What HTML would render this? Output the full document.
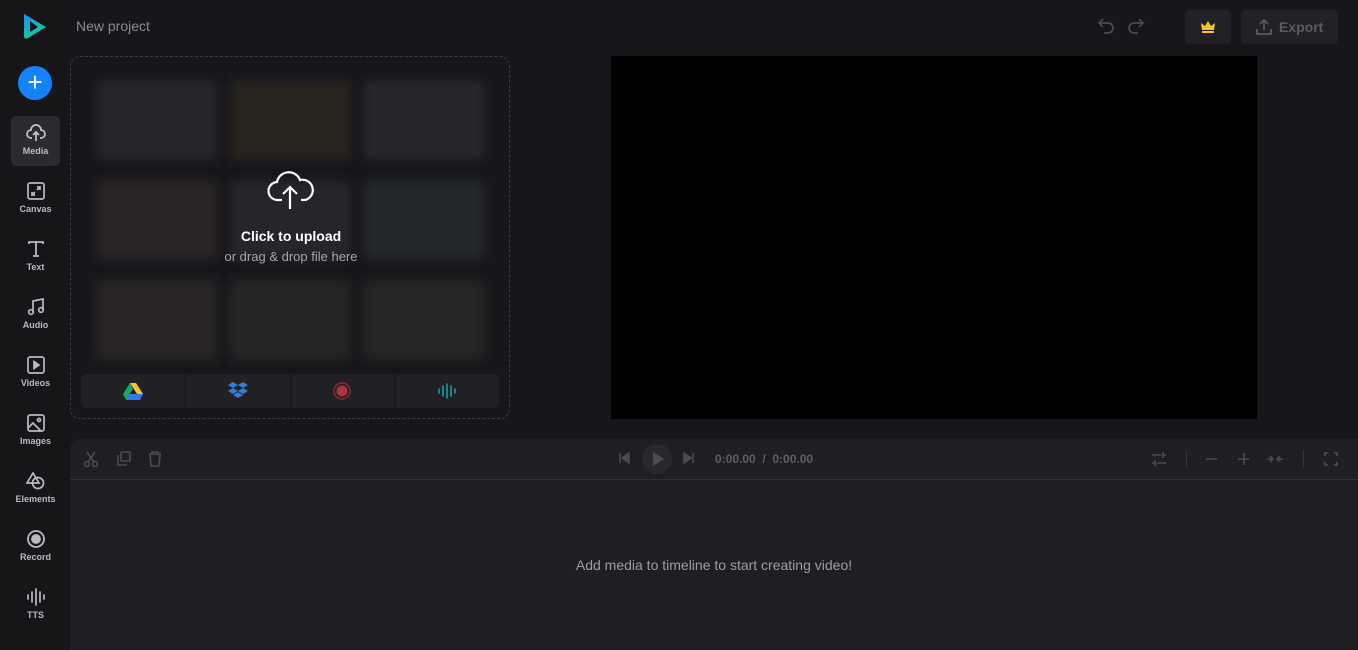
<!DOCTYPE html>
<html><head><meta charset="utf-8"><style>
*{margin:0;padding:0;box-sizing:border-box}
body{width:1358px;height:650px;background:#17171b;font-family:"Liberation Sans",sans-serif;position:relative;overflow:hidden;color:#bbb}
.abs{position:absolute}
.side{left:0;top:0;width:70px;height:650px;background:#161619}
.nav{position:absolute;left:11px;width:49px;height:50px;text-align:center;font-size:9px;font-weight:bold;color:#b9bac0}
.nav svg{display:block;margin:8px auto 4px}
.nav.act{background:#2a2a2f;border-radius:5px}
.tile{position:absolute;width:122px;height:78px;border-radius:3px;filter:blur(5px)}
.drop{left:70px;top:56px;width:440px;height:363px;border:1px dashed #3a3a40;border-radius:10px;overflow:hidden}
.bar{position:absolute;left:10px;top:317px;width:418px;height:34px;background:#212125;border-radius:5px;display:flex}
.bar div{flex:1;display:flex;align-items:center;justify-content:center;border-right:1px solid #17171b}
.bar div:last-child{border:none}
.tl{left:70px;top:439px;width:1288px;height:211px;background:#1f1f23;border-top-left-radius:10px}
.ic{stroke:#4b4b52;fill:none;stroke-width:1.6}
</style></head><body>
<div class="abs side"></div>
<svg class="abs" style="left:22px;top:13px" width="26" height="28" viewBox="0 0 26 28"><defs><linearGradient id="g" x1="0" y1="0" x2="0.6" y2="1"><stop offset="0" stop-color="#1e8bff"/><stop offset="1" stop-color="#18d08a"/></linearGradient></defs><path d="M2 1 L24 14 L6 25 Q2 27 2 23 Z M8 8 L8 19 L16 14 Z" fill="url(#g)" fill-rule="evenodd"/></svg>
<div class="abs" style="left:76px;top:18px;font-size:14px;color:#8a8b92">New project</div>
<div class="abs" style="left:18px;top:66px;width:34px;height:34px;border-radius:50%;background:#1582ff;color:#fff;font-size:26px;line-height:32px;text-align:center">+</div>
<div class="nav act" style="top:116px"><svg width="20" height="18" viewBox="0 0 20 18" fill="none" stroke="#c5c6cc" stroke-width="1.7"><path d="M6 14H5a4 4 0 0 1 0-8 5 5 0 0 1 10 0 4 4 0 0 1 0 8h-1"/><path d="M10 17V9M7 11l3-3 3 3"/></svg>Media</div>
<div class="nav" style="top:174px"><svg width="18" height="18" viewBox="0 0 18 18" fill="none" stroke="#b9bac0" stroke-width="1.7"><rect x="1" y="1" width="16" height="16" rx="2"/><path d="M5 13l3-3M5 10v3h3M13 5l-3 3M13 8V5h-3"/></svg>Canvas</div>
<div class="nav" style="top:232px"><svg width="18" height="18" viewBox="0 0 18 18" fill="none" stroke="#b9bac0" stroke-width="1.8"><path d="M2 4V2h14v2M9 2v14M6 16h6"/></svg>Text</div>
<div class="nav" style="top:290px"><svg width="18" height="18" viewBox="0 0 18 18" fill="none" stroke="#b9bac0" stroke-width="1.7"><path d="M6 14V3l10-2v11"/><circle cx="4" cy="14" r="2.3"/><circle cx="14" cy="12" r="2.3"/></svg>Audio</div>
<div class="nav" style="top:348px"><svg width="18" height="18" viewBox="0 0 18 18" fill="none" stroke="#b9bac0" stroke-width="1.7"><rect x="1" y="1" width="16" height="16" rx="2"/><path d="M7 5.5v7l5-3.5z" fill="#b9bac0"/></svg>Videos</div>
<div class="nav" style="top:406px"><svg width="18" height="18" viewBox="0 0 18 18" fill="none" stroke="#b9bac0" stroke-width="1.7"><rect x="1" y="1" width="16" height="16" rx="2"/><path d="M1 14l5-5 8 8"/><circle cx="12" cy="6" r="1.5"/></svg>Images</div>
<div class="nav" style="top:464px"><svg width="20" height="18" viewBox="0 0 20 18" fill="none" stroke="#b9bac0" stroke-width="1.7"><path d="M7 1L1 11h12z"/><circle cx="12" cy="11" r="5.5"/></svg>Elements</div>
<div class="nav" style="top:522px"><svg width="20" height="18" viewBox="0 0 20 18" fill="none" stroke="#b9bac0" stroke-width="1.8"><circle cx="10" cy="9" r="8"/><circle cx="10" cy="9" r="4" fill="#b9bac0"/></svg>Record</div>
<div class="nav" style="top:580px"><svg width="20" height="18" viewBox="0 0 20 18" fill="none" stroke="#b9bac0" stroke-width="1.7" stroke-linecap="round"><path d="M2 7v4M6 4v10M10 1v16M14 4v10M18 7v4"/></svg>TTS</div>

<div class="abs drop">
<div class="tile" style="left:25px;top:24px;background:#25262a"></div>
<div class="tile" style="left:158px;top:24px;background:#28241e"></div>
<div class="tile" style="left:292px;top:24px;background:#26272b"></div>
<div class="tile" style="left:25px;top:124px;background:#2a2425"></div>
<div class="tile" style="left:158px;top:124px;background:#25262a"></div>
<div class="tile" style="left:292px;top:124px;background:#24272b"></div>
<div class="tile" style="left:25px;top:224px;background:#282524"></div>
<div class="tile" style="left:158px;top:224px;background:#272524"></div>
<div class="tile" style="left:292px;top:224px;background:#272624"></div>
<svg class="abs" style="left:196px;top:110px" width="48" height="44" viewBox="0 0 48 44" fill="none" stroke="#fff" stroke-width="2.2"><path d="M15 33h-4a9 9 0 0 1-1-18 12 12 0 0 1 23-2 9 9 0 0 1 5 20h-4"/><path d="M23 42V20M16 27l7-7 7 7"/></svg>
<div class="abs" style="left:0;width:440px;top:171px;text-align:center;color:#fff;font-weight:bold;font-size:14px">Click to upload</div>
<div class="abs" style="left:0;width:440px;top:192px;text-align:center;color:#a5a6ad;font-size:13px">or drag &amp; drop file here</div>
<div class="bar">
<div><svg width="20" height="17" viewBox="0 0 20 17"><path d="M7 0h6l7 11h-6z" fill="#f8c22a"/><path d="M7 0L0 11l3 6 7-11z" fill="#1ea362"/><path d="M3 17h14l3-6H6z" fill="#3578e8"/></svg></div>
<div><svg width="20" height="18" viewBox="0 0 20 18" fill="#2f7fd8"><path d="M5 0l5 3-5 3-5-3zM15 0l5 3-5 3-5-3zM5 6l5 3-5 3-5-3zM15 6l5 3-5 3-5-3zM5 13l5-3 5 3-5 3z"/></svg></div>
<div><svg width="18" height="18" viewBox="0 0 18 18"><circle cx="9" cy="9" r="8" fill="none" stroke="#8a2a33" stroke-width="1.5"/><circle cx="9" cy="9" r="5.5" fill="#b0323d"/></svg></div>
<div><svg width="20" height="16" viewBox="0 0 20 16" stroke="#1f9aa0" stroke-width="1.6" stroke-linecap="round"><path d="M2 6v4M6 3v10M10 1v14M14 3v10M18 6v4"/></svg></div>
</div>
</div>

<div class="abs" style="left:611px;top:56px;width:646px;height:363px;background:#000"></div>

<svg class="abs" style="left:1096px;top:18px" width="50" height="18" viewBox="0 0 50 18" fill="none" stroke="#4a4b52" stroke-width="1.7"><path d="M4 5h8a5 5 0 0 1 0 10H8M7 1L3 5l4 4"/><path d="M46 5h-8a5 5 0 0 0 0 10h4M43 1l4 4-4 4"/></svg>
<div class="abs" style="left:1185px;top:10px;width:46px;height:34px;background:#222226;border-radius:5px"><svg style="margin:10px 0 0 15px" width="16" height="14" viewBox="0 0 16 14" fill="#f5c12e"><path d="M1 3l4 3 3-5 3 5 4-3-1 7H2z"/><rect x="2" y="11" width="12" height="2"/></svg></div>
<div class="abs" style="left:1241px;top:10px;width:97px;height:34px;background:#222226;border-radius:5px;color:#5a5b62;font-weight:bold;font-size:14px;line-height:34px"><svg style="position:absolute;left:15px;top:9px" width="16" height="16" viewBox="0 0 16 16" fill="none" stroke="#5a5b62" stroke-width="1.7"><path d="M1 10v5h14v-5M8 11V2M4 5l4-4 4 4"/></svg><span style="position:absolute;left:38px">Export</span></div>

<div class="abs tl">
<div class="abs" style="left:0;top:40px;width:1288px;height:1px;background:#2f2f34"></div>
<svg class="abs" style="left:13px;top:11px" width="100" height="18" viewBox="0 0 100 18"><g class="ic"><circle cx="4" cy="14" r="2.5"/><circle cx="12" cy="14" r="2.5"/><path d="M5 12L12 2M11 12L4 2"/><rect x="38" y="2" width="9" height="9" rx="1"/><path d="M35 5v10h9"/><path d="M66 4h12M69 4V2h6v2M67 4l1 12h8l1-12"/></g></svg>
<svg class="abs" style="left:548px;top:4px" width="80" height="32" viewBox="0 0 80 32"><path d="M2 10v10M11 10l-7 5 7 5z" fill="#4b4b52" stroke="#4b4b52" stroke-width="1.5"/><circle cx="39" cy="16" r="15" fill="#29292d"/><path d="M35 9v14l11-7z" fill="#4b4b52"/><path d="M66 10l7 5-7 5zM75 10v10" fill="#4b4b52" stroke="#4b4b52" stroke-width="1.5"/></svg>
<div class="abs" style="left:645px;top:13px;font-size:12px;font-weight:bold;color:#5e5f66">0:00.00 &nbsp;/&nbsp; 0:00.00</div>
<svg class="abs" style="left:1080px;top:11px" width="200" height="18" viewBox="0 0 200 18"><g class="ic" stroke="#8a8b92"><path d="M2 5h9M13 5h3M13 2v6M2 13h3M7 13h9M5 10v6"/></g><rect x="36" y="0" width="1" height="20" fill="#34343a"/><g class="ic"><path d="M56 9h11M88 9h11M94 3v12M117 9h6M127 9h6M120 6l3 3-3 3M130 6l-3 3 3 3"/></g><rect x="153" y="0" width="1" height="20" fill="#34343a"/><g class="ic"><path d="M175 6V3h3M184 3h3v3M187 12v3h-3M178 15h-3v-3"/></g></svg>
<div class="abs" style="left:0;width:1288px;top:118px;text-align:center;font-size:14px;color:#9c9da4">Add media to timeline to start creating video!</div>
</div>
</body></html>
